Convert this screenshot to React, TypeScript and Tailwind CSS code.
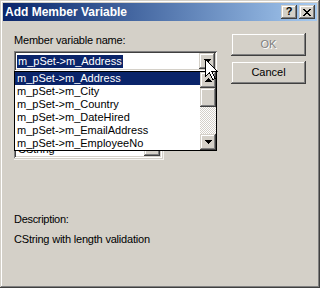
import React from "react";

const raised =
  "shadow-[inset_-1px_-1px_#404040,inset_1px_1px_#d4d0c8,inset_-2px_-2px_#808080,inset_2px_2px_#ffffff]";
const sunken =
  "shadow-[inset_1px_1px_#808080,inset_-1px_-1px_#ffffff,inset_2px_2px_#404040,inset_-2px_-2px_#d4d0c8]";

function DownArrow() {
  return (
    <svg width="7" height="4" viewBox="0 0 7 4" shapeRendering="crispEdges">
      <path d="M0 0h7v1H0zM1 1h5v1H1zM2 2h3v1H2zM3 3h1v1H3z" fill="#000" />
    </svg>
  );
}
function UpArrow() {
  return (
    <svg width="7" height="4" viewBox="0 0 7 4" shapeRendering="crispEdges">
      <path d="M3 0h1v1H3zM2 1h3v1H2zM1 2h5v1H1zM0 3h7v1H0z" fill="#000" />
    </svg>
  );
}

const items = [
  "m_pSet->m_Address",
  "m_pSet->m_City",
  "m_pSet->m_Country",
  "m_pSet->m_DateHired",
  "m_pSet->m_EmailAddress",
  "m_pSet->m_EmployeeNo",
];

export default function App() {
  return (
    <div
      className={`relative w-[320px] h-[288px] overflow-hidden bg-[#d4d0c8] p-[3px] text-[11px] leading-[13px] text-black font-['Liberation_Sans',Arial,sans-serif] ${raised}`}
    >
      {/* Title bar */}
      <div className="flex h-[18px] items-center bg-linear-to-r from-[#0a246a] to-[#a6caf0] pl-[2px] pr-[2px]">
        <div className="flex-1 text-[12px] font-bold leading-[14px] text-white">
          Add Member Variable
        </div>
        <div className="flex gap-[2px]">
          <div
            className={`flex h-[14px] w-[16px] items-center justify-center bg-[#d4d0c8] text-[11px] font-bold leading-none ${raised}`}
          >
            <span className="-mt-[1px]">?</span>
          </div>
          <div
            className={`flex h-[14px] w-[16px] items-center justify-center bg-[#d4d0c8] ${raised}`}
          >
            <svg width="8" height="7" viewBox="0 0 8 7" shapeRendering="crispEdges">
              <path
                d="M0 0h2v1H0zM6 0h2v1H6zM1 1h2v1H1zM5 1h2v1H5zM2 2h4v1H2zM3 3h2v1H3zM2 4h4v1H2zM1 5h2v1H1zM5 5h2v1H5zM0 6h2v1H0zM6 6h2v1H6z"
                fill="#000"
              />
            </svg>
          </div>
        </div>
      </div>

      {/* Body */}
      <div className="flex items-start pl-[11px] pt-[12px]">
        {/* Left column */}
        <div className="flex w-[203px] flex-col pt-[1px]">
          <div className="h-[13px] tracking-[-0.2px]">Member variable name:</div>

          {/* Combo with dropdown open */}
          <div className="relative mt-[4px]">
            <div className={`flex h-[20px] items-center bg-white p-[2px] ${sunken}`}>
              <div className="flex-1 pl-[1px]">
                <span className="inline-block h-[13px] bg-[#0a246a] px-[1px] text-white">
                  m_pSet-&gt;m_Address
                </span>
              </div>
              <div
                className={`flex h-[16px] w-[16px] items-center justify-center bg-[#d4d0c8] ${raised}`}
              >
                <DownArrow />
              </div>
            </div>

            {/* Dropdown list (overlay) */}
            <div className="absolute left-0 top-[20px] z-10 flex h-[80px] w-[203px] border border-black bg-white">
              <div className="flex flex-1 flex-col">
                {items.map((t, i) => (
                  <div
                    key={t}
                    className={`h-[13px] pl-[2px] ${
                      i === 0 ? "bg-[#0a246a] text-white" : ""
                    }`}
                  >
                    {t}
                  </div>
                ))}
              </div>
              <div className="flex w-[16px] flex-col">
                <div
                  className={`flex h-[16px] w-[16px] items-center justify-center bg-[#d4d0c8] ${raised}`}
                >
                  <UpArrow />
                </div>
                <div className={`h-[19px] w-[16px] bg-[#d4d0c8] ${raised}`} />
                <div className="flex-1 bg-[repeating-conic-gradient(#d4d0c8_0_25%,#ffffff_0_50%)] bg-[length:2px_2px]" />
                <div
                  className={`flex h-[16px] w-[16px] items-center justify-center bg-[#d4d0c8] ${raised}`}
                >
                  <DownArrow />
                </div>
              </div>
            </div>
          </div>

          {/* Controls beneath the open list */}
          <div className="mt-[66px] w-[150px] border-b border-r border-[#f4f3ef] pb-[1px]">
            <div className={`flex h-[21px] w-[148px] items-end bg-white p-[2px] ${sunken}`}>
              <div className="flex-1 pl-[2px]">CString</div>
              <div className={`h-[17px] w-[16px] bg-[#d4d0c8] ${raised}`} />
            </div>
          </div>

          <div className="mt-[53px] h-[13px] tracking-[-0.3px]">Description:</div>
          <div className="mt-[7px] h-[13px] tracking-[-0.2px]">CString with length validation</div>
        </div>

        {/* Right column */}
        <div className="ml-[14px] flex flex-col gap-[5px]">
          <div
            className={`flex h-[23px] w-[75px] items-center justify-center bg-[#d4d0c8] text-[#808080] [text-shadow:1px_1px_#ffffff] ${raised}`}
          >
            OK
          </div>
          <div
            className={`flex h-[23px] w-[75px] items-center justify-center bg-[#d4d0c8] ${raised}`}
          >
            Cancel
          </div>
        </div>
      </div>

      {/* Mouse cursor overlay */}
      <svg
        className="absolute left-[205px] top-[59px] z-20"
        width="13"
        height="21"
        viewBox="0 0 13 21"
        shapeRendering="crispEdges"
      >
        <path
          d="M0.5 0.5V17.5L4.5 13.5L7.5 20.5L10 19.5L7 12.5H12.5Z"
          fill="#fff"
          stroke="#000"
          strokeWidth="1"
          strokeLinejoin="miter"
        />
      </svg>
    </div>
  );
}
